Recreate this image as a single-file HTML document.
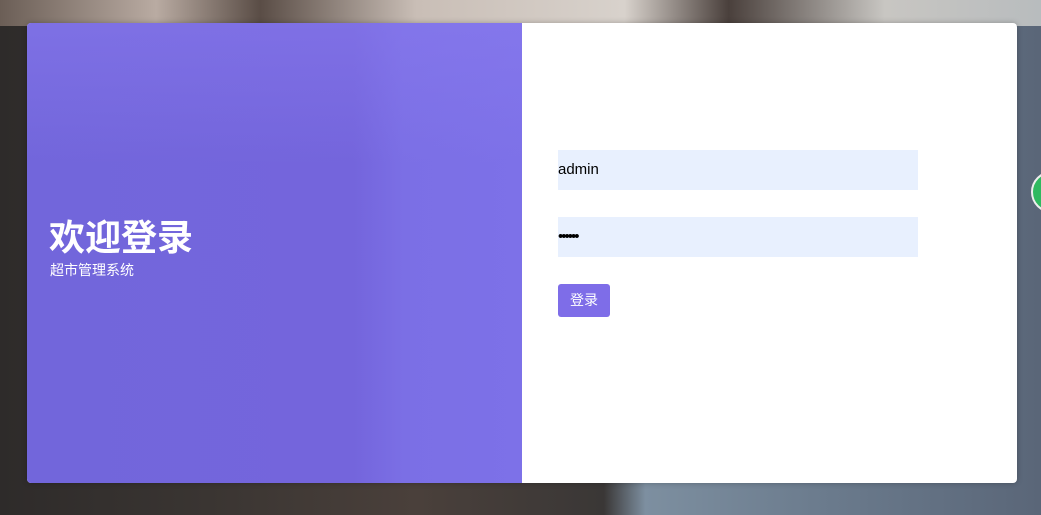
<!DOCTYPE html>
<html><head><meta charset="utf-8"><style>
*{margin:0;padding:0;box-sizing:border-box}
body{width:1041px;height:515px;overflow:hidden;position:relative;font-family:"Liberation Sans","Noto Sans CJK SC",sans-serif;
background:linear-gradient(90deg,#2e2b2a 0%,#3a3532 20%,#4a403b 40%,#3a3736 58%,#7d8fa0 62%,#6a7a8c 80%,#5a6678 100%);}
.top{position:absolute;left:0;top:0;width:1041px;height:26px;background:linear-gradient(90deg,#6b5e56 0%,#b9aba2 15%,#5a4d46 25%,#c9beb6 40%,#d8d2cc 60%,#4a403c 70%,#c8c6c2 85%,#b8bcbe 100%)}
.card{position:absolute;left:27px;top:23px;width:990px;height:460px;border-radius:4px;overflow:hidden;background:#fff;box-shadow:0 0 6px rgba(0,0,0,.25)}
.left{position:absolute;left:0;top:0;width:495px;height:460px;background:linear-gradient(90deg,#7266db 0%,#7465dc 66%,#7b6fe5 76%,#7d71e8 100%)}
.left::before{content:"";position:absolute;left:0;top:0;width:495px;height:140px;background:linear-gradient(180deg,rgba(140,125,240,.45),rgba(140,125,240,0))}
h1{position:absolute;left:22px;top:190px;color:#fff;font-size:36px;font-weight:bold;font-family:"Noto Sans CJK SC",sans-serif;line-height:44px}
.sub{position:absolute;left:23px;top:237px;color:#fff;font-size:14px;font-family:"Noto Sans CJK SC",sans-serif}
.in{position:absolute;left:531px;width:360px;height:40px;background:#e8f0fe;font-size:15px;color:#000;line-height:40px}
.btn{position:absolute;left:531px;top:261px;width:52px;height:33px;background:#7e6de8;border-radius:3px;color:#fff;font-size:14px;line-height:33px;text-align:center;font-family:"Noto Sans CJK SC",sans-serif}
.g{position:absolute;left:1031px;top:171px;width:42px;height:42px;border-radius:50%;background:#2fb960;border:2px solid #eee}
</style></head><body>
<div class="top"></div>
<div class="g"></div>
<div class="card">
<div class="left"><h1>欢迎登录</h1><div class="sub">超市管理系统</div></div>
<div class="in" style="top:127px">admin</div>
<div class="in" style="top:194px;font-size:15px;letter-spacing:-2px">••••••</div>
<div class="btn">登录</div>
</div>
</body></html>
